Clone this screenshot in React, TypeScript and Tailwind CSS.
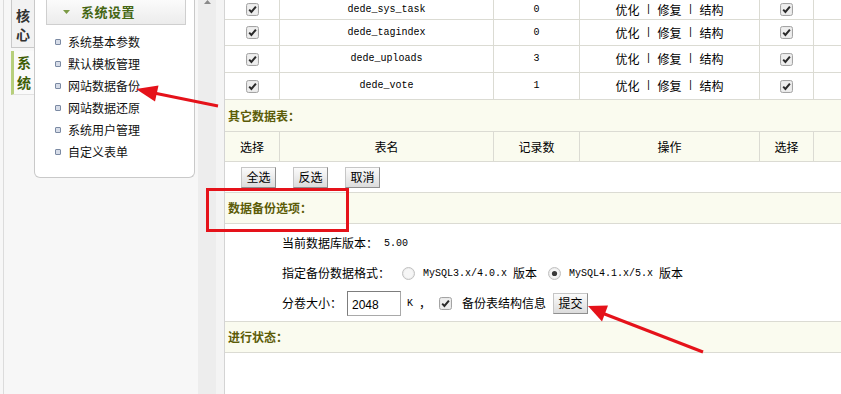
import React from "react";

const CJK = "font-['Noto_Sans_CJK_SC',sans-serif]";
const MONO = "font-['Liberation_Mono',monospace] text-[10px]";
const COLS = "grid grid-cols-[55px_214px_86px_180px_54px_1fr]";
const LINE = "border-[#dbdbd3]";

// first row is scrolled partly out of view
const tables = [
  { name: "dede_sys_task", count: 0, h: "h-[20px]" },
  { name: "dede_tagindex", count: 0, h: "h-[26px]" },
  { name: "dede_uploads", count: 3, h: "h-[27px]" },
  { name: "dede_vote", count: 1, h: "h-[27px]" },
];

const menu = ["系统基本参数", "默认模板管理", "网站数据备份", "网站数据还原", "系统用户管理", "自定义表单"];

function Check() {
  return (
    <svg width="13" height="13" viewBox="0 0 13 13" className="shrink-0">
      <rect x="0.5" y="0.5" width="12" height="12" rx="2" fill="#e4e4e4" stroke="#a4a4a4" />
      <rect x="1.5" y="1.5" width="10" height="10" rx="1" fill="#eeeeee" />
      <path d="M3.2 6.6 L5.4 8.9 L9.9 3.6" fill="none" stroke="#2a2a2a" strokeWidth="2" />
    </svg>
  );
}

function Radio({ on }: { on?: boolean }) {
  return (
    <svg width="13" height="13" viewBox="0 0 13 13" className="shrink-0">
      <circle cx="6.5" cy="6.5" r="6" fill="#ececec" stroke="#c0c0c0" />
      <circle cx="6.5" cy="6.5" r="4.5" fill="#f6f6f6" />
      {on && <circle cx="6.5" cy="6.5" r="2.6" fill="#3a3a3a" />}
    </svg>
  );
}

function Btn({ children }: { children: React.ReactNode }) {
  return (
    <div className="h-[21px] w-[35px] flex items-center justify-center bg-gradient-to-b from-[#fbfbfb] to-[#dcdcdc] border border-[#c6c6c6] border-r-[#8f8f8f] border-b-[#8f8f8f] text-[12px] text-black">
      {children}
    </div>
  );
}

function Section({ title, h }: { title: string; h: string }) {
  return (
    <div className={`${h} flex items-center pl-[3px] bg-[#fafbef] border-b ${LINE} text-[12px] font-bold text-[#5c5c08]`}>
      {title}
    </div>
  );
}

function Ops() {
  return (
    <span className="flex items-center leading-[14px]">
      优化<span className={`${MONO} whitespace-pre`}> | </span>修复<span className={`${MONO} whitespace-pre`}> | </span>结构
    </span>
  );
}

export default function App() {
  return (
    <div className={`relative w-[841px] h-[394px] overflow-hidden flex bg-[#f7f7f7] text-black ${CJK}`}>
      {/* vertical tabs */}
      <div className="w-[34px] shrink-0 pl-[3px]">
        <div className="h-full border-l border-[#dcdcdc] pl-[7px] flex flex-col">
          <div className="w-[23px] h-[48px] pt-[6px] bg-[#f2f2f2] border-l border-b border-[#c9c9c9] flex flex-col items-center text-[14px] leading-[19px] font-bold text-[#333]">
            <span>核</span>
            <span>心</span>
          </div>
          <div className="w-[23px] h-[44px] mt-[3px] pt-[1px] bg-[#fafafa] border-l-[3px] border-[#b7cf7c] border-b border-b-[#e2e2e2] flex flex-col items-center text-[14px] leading-[20px] font-bold text-[#3f5e06]">
            <span>系</span>
            <span>统</span>
          </div>
        </div>
      </div>

      {/* menu panel */}
      <div className="w-[161px] h-[178px] shrink-0 bg-white border-x border-b border-[#c9c9c9] rounded-b-[6px]">
        <div className="ml-[11px] w-[140px] h-[25px] flex items-center pl-[16px] bg-gradient-to-b from-[#fbfbfb] to-[#ececec] border-x border-b border-[#cfcfcf]">
          <svg width="7" height="4" viewBox="0 0 7 4" className="shrink-0">
            <path d="M0 0 H7 L3.5 4 Z" fill="#7b9a45" />
          </svg>
          <span className="ml-[11px] text-[13px] font-bold text-[#456614] tracking-[0.5px]">系统设置</span>
        </div>
        <ul className="mt-[6px]">
          {menu.map((m) => (
            <li key={m} className="h-[22px] flex items-center pl-[20px] text-[12px] text-[#111]">
              <span className="w-[6px] h-[6px] rounded-[1px] border border-[#7b8aa3] bg-[#d6dce8] shrink-0" />
              <span className="ml-[7px]">{m}</span>
            </li>
          ))}
        </ul>
      </div>

      {/* scroll track */}
      <div className="ml-[3px] w-[18px] shrink-0 h-full bg-[#ededed] flex justify-center">
        <svg width="7" height="4" viewBox="0 0 7 4">
          <path d="M0 4 H7 L3.5 0 Z" fill="#8a8a8a" />
        </svg>
      </div>
      <div className="w-[8px] shrink-0 bg-[#f4f4f4]" />

      {/* content */}
      <div className="flex-1 h-full flex flex-col bg-white border-l border-[#d4d4d4] overflow-hidden text-[12px]">
        <div>
          {tables.map((t) => (
            <div key={t.name} className={`${COLS} ${t.h} border-b ${LINE} leading-[14px]`}>
              <div className={`flex items-center justify-center border-r ${LINE}`}>
                <Check />
              </div>
              <div className={`flex items-center justify-center border-r ${LINE} ${MONO}`}>{t.name}</div>
              <div className={`flex items-center justify-center border-r ${LINE} ${MONO}`}>{t.count}</div>
              <div className={`flex items-center justify-center border-r ${LINE}`}>
                <Ops />
              </div>
              <div className={`flex items-center justify-center border-r ${LINE}`}>
                <Check />
              </div>
              <div />
            </div>
          ))}
        </div>

        <Section title="其它数据表：" h="h-[32px]" />

        <div className={`${COLS} h-[30px] bg-[#fafbef] border-b ${LINE}`}>
          {["选择", "表名", "记录数", "操作", "选择"].map((c, i) => (
            <div key={i} className={`flex items-center justify-center border-r ${LINE}`}>
              {c}
            </div>
          ))}
          <div />
        </div>

        <div className={`h-[31px] flex items-center pl-[16px] gap-[17px] border-b ${LINE}`}>
          <Btn>全选</Btn>
          <Btn>反选</Btn>
          <Btn>取消</Btn>
        </div>

        <Section title="数据备份选项：" h="h-[31px]" />

        <div className={`h-[98px] pt-[4px] pl-[57px] border-b ${LINE}`}>
          <div className="h-[30px] flex items-center">
            当前数据库版本：<span className={`${MONO} ml-[6px]`}>5.00</span>
          </div>
          <div className="h-[30px] flex items-center">
            <span>指定备份数据格式：</span>
            <span className="ml-[12px]">
              <Radio />
            </span>
            <span className="ml-[8px] flex items-center">
              <span className={`${MONO} whitespace-pre`}>MySQL3.x/4.0.x </span>版本
            </span>
            <span className="ml-[11px]">
              <Radio on />
            </span>
            <span className="ml-[8px] flex items-center">
              <span className={`${MONO} whitespace-pre`}>MySQL4.1.x/5.x </span>版本
            </span>
          </div>
          <div className="h-[30px] flex items-center">
            <span>分卷大小：</span>
            <div className="ml-[5px] w-[54px] h-[25px] pt-[3px] pl-[4px] bg-white border border-[#a9a9a9] border-t-[#7d7d7d] border-l-[#7d7d7d] font-['Liberation_Sans',sans-serif] text-[12px] flex items-center">
              2048
            </div>
            <span className={`${MONO} ml-[6px] whitespace-pre`}>K </span>
            <span>，</span>
            <span className="ml-[8px]">
              <Check />
            </span>
            <span className="ml-[10px]">备份表结构信息</span>
            <span className="ml-[7px]">
              <Btn>提交</Btn>
            </span>
          </div>
        </div>

        <Section title="进行状态：" h="h-[31px]" />
      </div>

      {/* annotations */}
      <div className="absolute left-[206px] top-[188px] w-[143px] h-[44px] border-[3px] border-[#e5121a]" />
      <svg className="absolute inset-0 pointer-events-none" width="841" height="394" viewBox="0 0 841 394">
        <line x1="218" y1="106" x2="154" y2="93" stroke="#e5121a" strokeWidth="3" />
        <path d="M136 89 L158.5 85.5 L155 101.5 Z" fill="#e5121a" />
        <line x1="703" y1="352" x2="602" y2="313" stroke="#e5121a" strokeWidth="3" />
        <path d="M588 306 L608 305.5 L602 321.5 Z" fill="#e5121a" />
      </svg>
    </div>
  );
}
